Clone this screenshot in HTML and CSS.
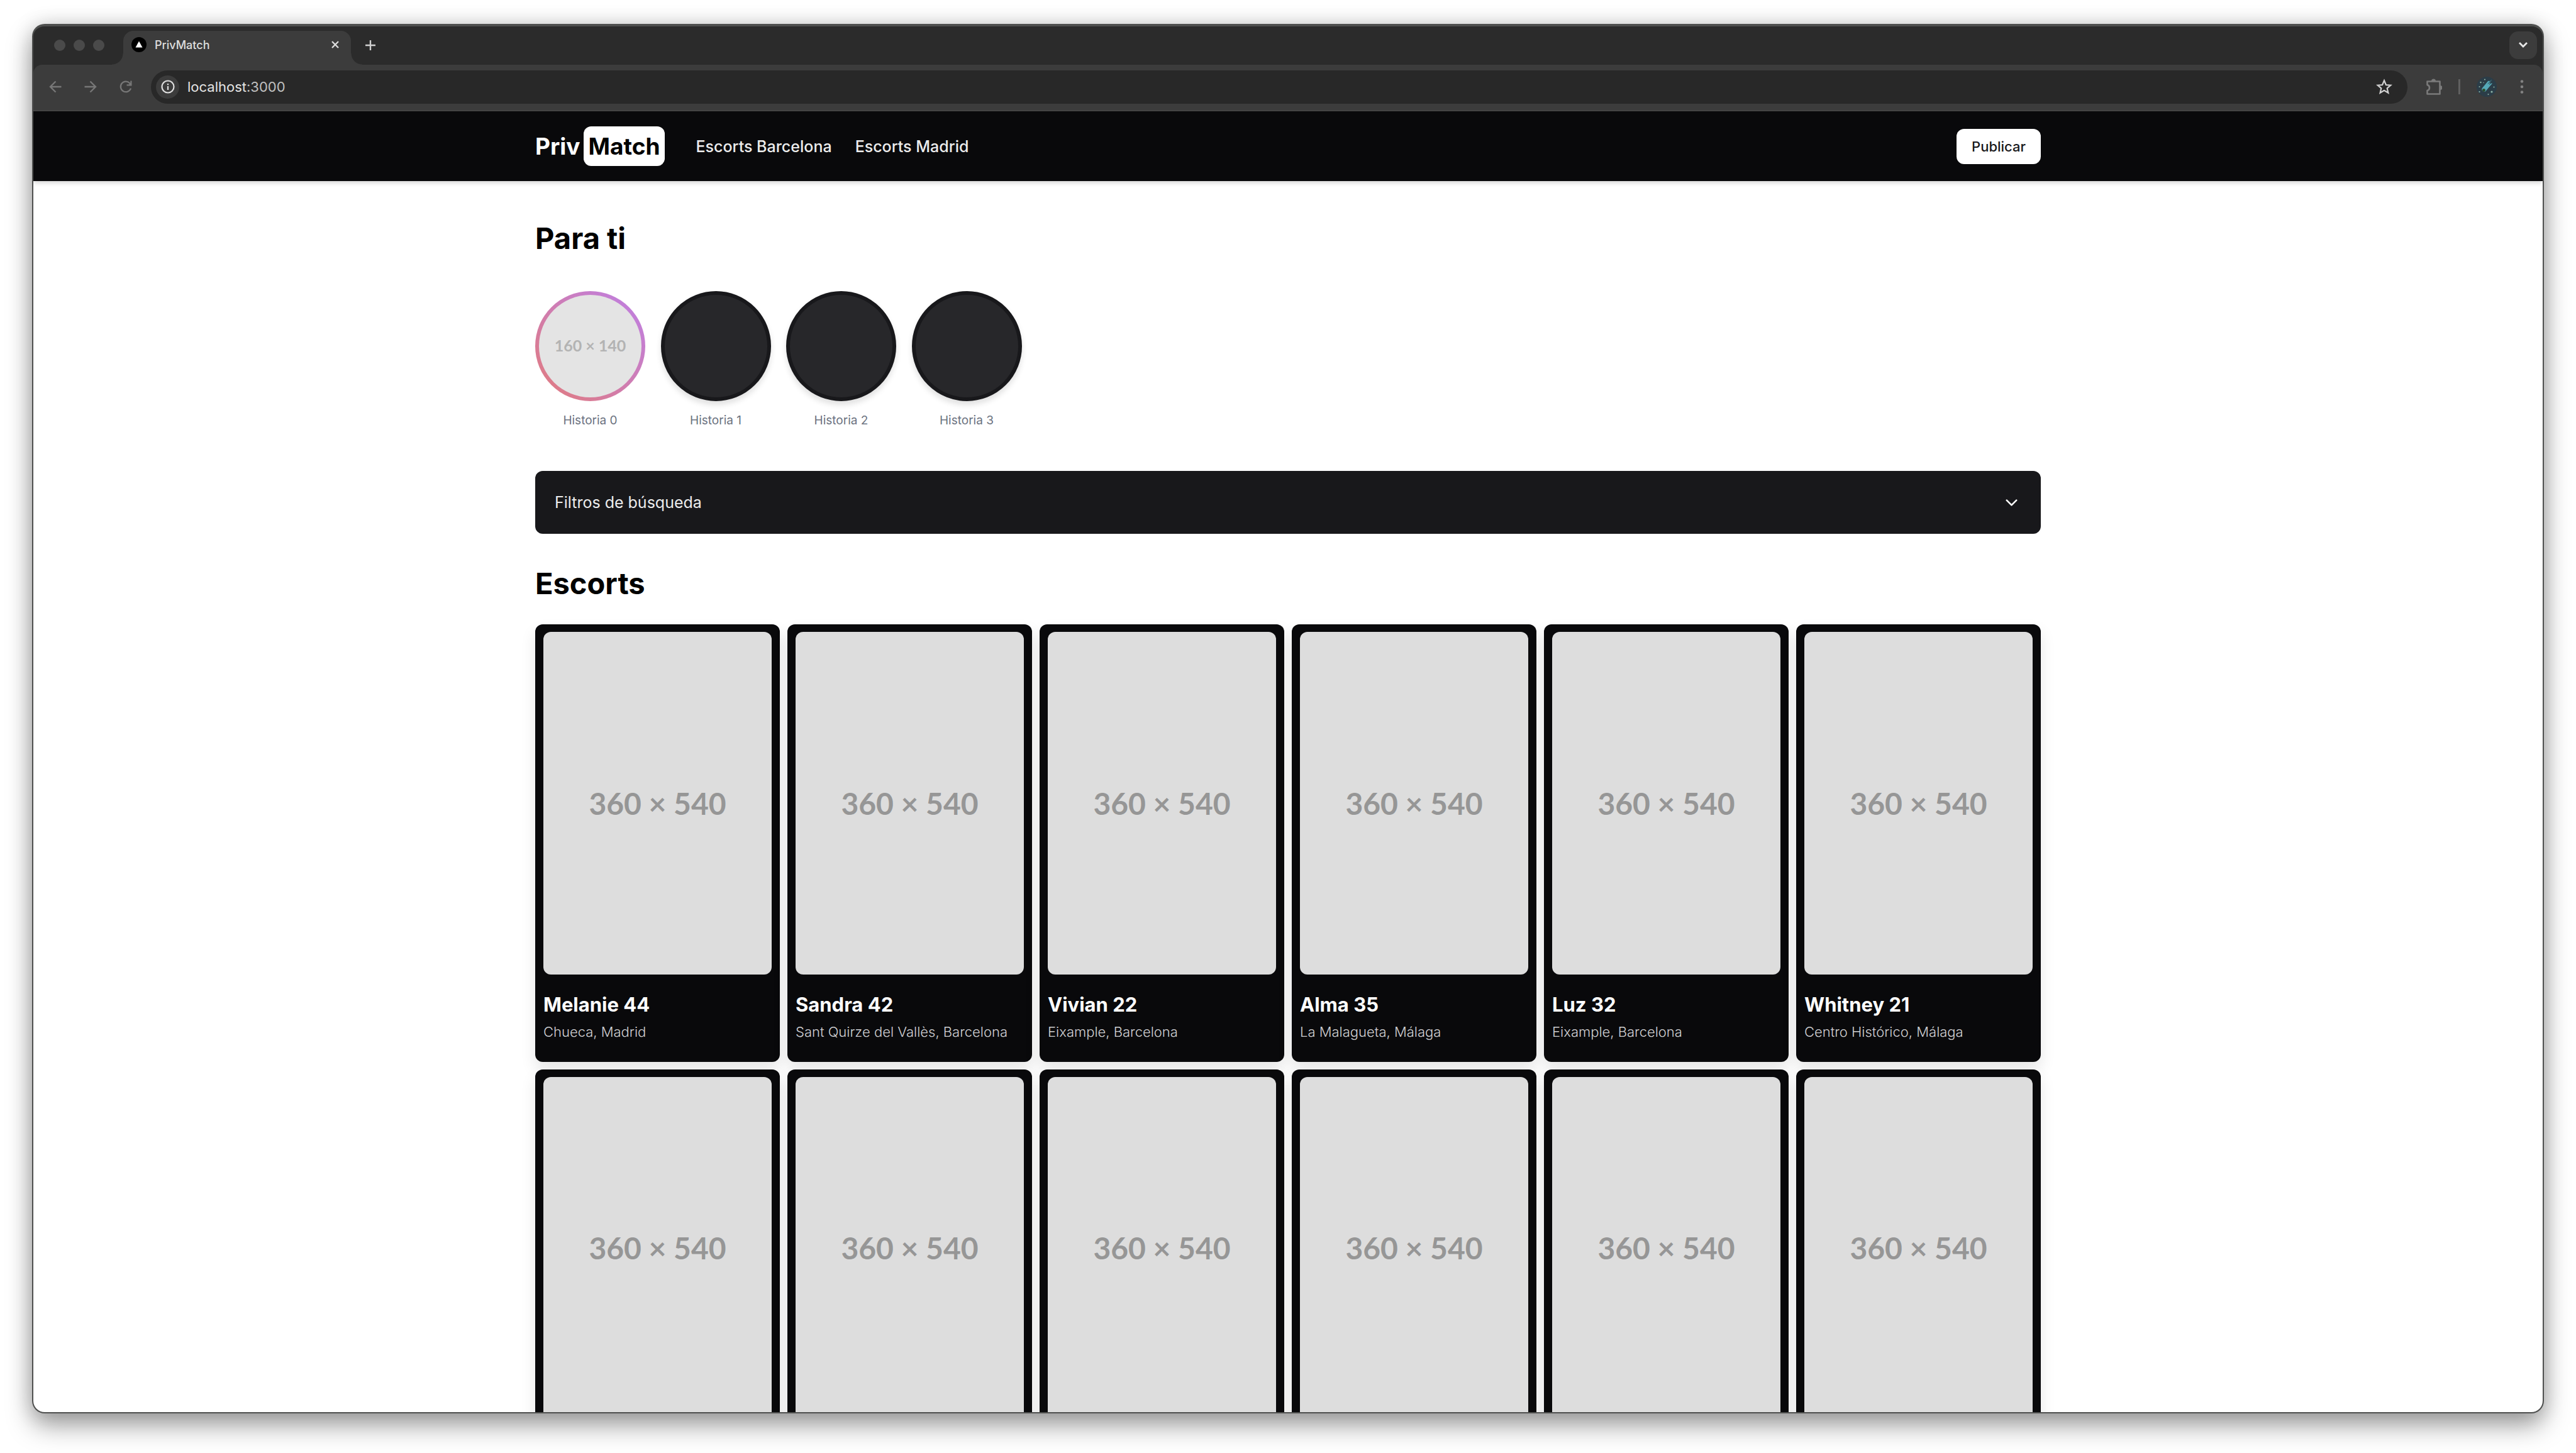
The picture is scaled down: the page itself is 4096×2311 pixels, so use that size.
FILE: index.html
```
<!DOCTYPE html>
<html lang="es">
<head>
<meta charset="utf-8">
<title>PrivMatch</title>
<link rel="stylesheet" href="styles.css">
</head>
<body>
<div class="window">
  <div class="tabstrip">
    <div class="lights"><span class="light"></span><span class="light"></span><span class="light"></span></div>
    <div class="tab">
      <svg class="favicon" viewBox="0 0 24 24"><circle cx="12" cy="12" r="12" fill="#000"/><path d="M12 6.500l5.500 10h-11z" fill="#fff"/></svg>
      <span class="tab-title">PrivMatch</span>
      <button class="bare" aria-label="Cerrar pestaña"><svg width="14" height="14" viewBox="0 0 14 14"><path d="M2 2l10 10M12 2L2 12" stroke="#dcdcdc" stroke-width="2.400" fill="none"/></svg></button>
    </div>
    <button class="bare newtab" aria-label="Nueva pestaña"><svg width="16" height="16" viewBox="0 0 16 16"><path d="M8 0v16M0 8h16" stroke="#d0d0d0" stroke-width="2.400" fill="none"/></svg></button>
    <button class="bare tabsearch" aria-label="Buscar pestañas"><svg width="16" height="11" viewBox="0 0 16 11"><path d="M2 2l6 6 6-6" stroke="#e8e8e8" stroke-width="2.800" fill="none"/></svg></button>
  </div>
  <div class="toolbar">
    <div class="nav-buttons">
      <button class="bare" aria-label="Atrás"><svg width="24" height="24" viewBox="0 0 24 24"><path d="M21.500 12H4M12.500 3.500L4 12l8.500 8.500" stroke="#777" stroke-width="2.400" fill="none"/></svg></button>
      <button class="bare" aria-label="Adelante"><svg width="24" height="24" viewBox="0 0 24 24"><path d="M2.500 12H20M11.500 3.500L20 12l-8.500 8.500" stroke="#777" stroke-width="2.400" fill="none"/></svg></button>
      <button class="bare" aria-label="Recargar"><svg width="24" height="24" viewBox="0 0 24 24"><path d="M20 14.500A8.300 8.300 0 1 1 18.200 6.200L20 8" stroke="#777" stroke-width="2.300" fill="none"/><path d="M21.500 2.500V10.500H13.500V8.300H17L19.300 6V2.500z" fill="#777"/></svg></button>
    </div>
    <div class="address">
      <span class="site-info"><svg width="22" height="22" viewBox="0 0 22 22"><circle cx="11" cy="11" r="9.500" stroke="#dedede" stroke-width="2.200" fill="none"/><path d="M11 10v6M11 6v2.200" stroke="#dedede" stroke-width="2.200"/></svg></span>
      <span class="url">localhost<span class="port">:3000</span></span>
      <button class="bare star" aria-label="Añadir a marcadores"><svg width="26" height="26" viewBox="0 0 26 26"><path d="M13 3l2.900 7 7.400.600-5.600 4.900 1.700 7.300L13 18.900l-6.400 3.900 1.700-7.300L2.700 10.600l7.400-.600z" stroke="#d2d2d2" stroke-width="2.200" fill="none"/></svg></button>
    </div>
    <div class="extras">
      <button class="bare" aria-label="Extensiones"><svg width="26" height="28" viewBox="0 0 26 28"><path d="M2.500 5.500h20v20h-20v-5.500q3.500-1 3.500-4.500t-3.500-4.500z" stroke="#7a7a7a" stroke-width="2.600" stroke-linejoin="round" fill="none"/><path d="M9 5a3.500 3.500 0 0 1 7 0zM23 12a3.500 3.500 0 0 1 0 7z" fill="#7a7a7a"/></svg></button>
      <span class="divider"></span>
      <button class="bare avatar" aria-label="Perfil"><svg width="32" height="32" viewBox="0 0 32 32"><circle cx="16" cy="16" r="16" fill="#2b3d48"/><path d="M8.500 18.500L18.500 6.500 20 7.200 24 5l-2.500 4-1 1.500 4.500 0-2 2.500-1.500 1.500-7.500 9a4 4 0 0 1-5.500-5z" fill="#55a9b8"/><path d="M18 11.500l5-5.500M20 12.500l3-2.500" stroke="#2b3d48" stroke-width="1" fill="none"/><circle cx="11.500" cy="21.500" r="2.400" fill="#2c4a2c"/><g fill="#8fb5a8"><circle cx="6.500" cy="9" r="1.200"/><circle cx="13" cy="4.500" r="1.100"/><circle cx="4.500" cy="16" r="1"/><circle cx="11" cy="9.500" r=".7"/><circle cx="24" cy="24" r="1.600"/><circle cx="18.500" cy="28" r="1"/><circle cx="4.500" cy="24" r="1.100"/><circle cx="27.500" cy="16.500" r="1"/></g></svg></button>
      <button class="bare" aria-label="Menú"><svg width="6" height="24" viewBox="0 0 6 24"><g fill="#828282"><circle cx="3" cy="3.500" r="2.300"/><circle cx="3" cy="12" r="2.300"/><circle cx="3" cy="20.500" r="2.300"/></g></svg></button>
    </div>
  </div>

  <div class="page">
    <header class="site-header">
      <div class="container header-row">
        <a class="logo" href="#">Priv<span class="logo-box">Match</span></a>
        <nav class="site-nav"><a href="#">Escorts Barcelona</a><a href="#">Escorts Madrid</a></nav>
        <button class="publish">Publicar</button>
      </div>
    </header>
    <main class="container main">
      <h1 class="heading">Para ti</h1>
      <div class="stories">
        <figure class="story"><div class="ring ring-new"><span class="story-thumb">160 × 140</span></div><figcaption>Historia 0</figcaption></figure>
        <figure class="story"><div class="ring"></div><figcaption>Historia 1</figcaption></figure>
        <figure class="story"><div class="ring"></div><figcaption>Historia 2</figcaption></figure>
        <figure class="story"><div class="ring"></div><figcaption>Historia 3</figcaption></figure>
      </div>
      <button class="filters">Filtros de búsqueda<svg width="31" height="31" viewBox="0 0 24 24"><path d="M6 9l6 6 6-6" stroke="#fff" stroke-width="2" stroke-linecap="round" stroke-linejoin="round" fill="none"/></svg></button>
      <h2 class="heading">Escorts</h2>
      <div class="cards">
        <article class="card"><div class="photo">360 × 540</div><h3>Melanie 44</h3><p>Chueca, Madrid</p></article>
        <article class="card"><div class="photo">360 × 540</div><h3>Sandra 42</h3><p>Sant Quirze del Vallès, Barcelona</p></article>
        <article class="card"><div class="photo">360 × 540</div><h3>Vivian 22</h3><p>Eixample, Barcelona</p></article>
        <article class="card"><div class="photo">360 × 540</div><h3>Alma 35</h3><p>La Malagueta, Málaga</p></article>
        <article class="card"><div class="photo">360 × 540</div><h3>Luz 32</h3><p>Eixample, Barcelona</p></article>
        <article class="card"><div class="photo">360 × 540</div><h3>Whitney 21</h3><p>Centro Histórico, Málaga</p></article>
        <article class="card"><div class="photo">360 × 540</div></article>
        <article class="card"><div class="photo">360 × 540</div></article>
        <article class="card"><div class="photo">360 × 540</div></article>
        <article class="card"><div class="photo">360 × 540</div></article>
        <article class="card"><div class="photo">360 × 540</div></article>
        <article class="card"><div class="photo">360 × 540</div></article>
      </div>
    </main>
  </div>
</div>
</body>
</html>
```
FILE: styles.css
```
* { box-sizing: border-box; }

body {
  margin: 0;
  height: 100vh;
  padding: 38px 51px 63px;
  display: flex;
  overflow: hidden;
  background: #fff;
  font-family: Inter, "Liberation Sans", sans-serif;
}

h1, h2, h3, p, figure { margin: 0; }
a { color: inherit; text-decoration: none; }
svg { display: block; }
button { font: inherit; cursor: pointer; }
.bare { padding: 0; border: 0; background: none; color: inherit; }

/* Browser window */
.window {
  flex: 1;
  display: flex;
  flex-direction: column;
  overflow: hidden;
  border: 2px solid #4e4f4e;
  border-top-width: 4px;
  border-radius: 20px;
  background: #3c3c3c;
  box-shadow: 0 20px 40px rgba(0, 0, 0, .36), 0 0 32px rgba(0, 0, 0, .16);
}

.tabstrip {
  flex: none;
  display: flex;
  align-items: center;
  height: 61px;
  padding: 0 9px 2px 33px;
  background: #2b2b2b;
}
.lights { display: flex; gap: 13px; width: 110px; }
.light { width: 18px; height: 18px; border-radius: 50%; background: #4a4a4a; }
.tab {
  position: relative;
  align-self: flex-end;
  display: flex;
  align-items: center;
  width: 362px;
  height: 54px;
  margin-bottom: -2px;
  padding: 0 18px 10px 13px;
  border-radius: 16px 16px 0 0;
  background: #3c3c3c;
}
.tab::before, .tab::after {
  content: "";
  position: absolute;
  bottom: 0;
  width: 18px;
  height: 18px;
}
.tab::before { left: -18px; background: radial-gradient(circle at 0 0, #2b2b2b 17px, #3c3c3c 18px); }
.tab::after { right: -18px; background: radial-gradient(circle at 100% 0, #2b2b2b 17px, #3c3c3c 18px); }
.favicon { width: 24px; height: 24px; }
.tab-title { flex: 1; padding-left: 13px; font-size: 18px; font-weight: 500; color: #dedede; }
.newtab { margin-left: 23px; }
.tabsearch {
  display: grid;
  place-items: center;
  width: 44px;
  height: 44px;
  margin-left: auto;
  border-radius: 14px;
  background: #3c3c3c;
}

.toolbar {
  flex: none;
  display: flex;
  align-items: center;
  height: 74px;
  padding: 0 30px 2px 23px;
  border-bottom: 2px solid #444;
  border-radius: 14px 14px 0 0;
  box-shadow: 0 -14px 0 #2b2b2b;
  background: #3c3c3c;
}
.tabstrip { z-index: 1; }
.nav-buttons { display: flex; gap: 32px; width: 164px; }
.address {
  flex: 1;
  display: flex;
  align-items: center;
  height: 53px;
  padding: 0 24px 0 8px;
  border-radius: 27px;
  background: #282828;
}
.site-info {
  display: grid;
  place-items: center;
  width: 37px;
  height: 37px;
  border-radius: 50%;
  background: #3c3c3c;
}
.url { padding-left: 13px; font-size: 22px; color: #e3e3e3; }
.port { color: #c0c0c0; }
.star { margin-left: auto; }
.extras { display: flex; align-items: center; padding-left: 29px; }
.divider { width: 3px; height: 24px; margin: 0 26px; background: #606060; }
.avatar { margin-right: 37px; }

/* Page */
.page { flex: 1; min-height: 0; overflow: hidden; background: #fff; }
.container { width: 60%; margin: 0 auto; }

.site-header {
  position: relative;
  background: #09090b;
  box-shadow: 0 2px 8px rgba(0, 0, 0, .2);
}
.header-row { display: flex; align-items: center; height: 111px; color: #fff; }
.logo { display: flex; align-items: center; gap: 5px; font-size: 37px; font-weight: 700; }
.logo-box { padding: 0 8px; border-radius: 12px; background: #fff; color: #000; line-height: 63px; }
.site-nav { display: flex; gap: 37px; margin-left: 49px; font-size: 25px; font-weight: 500; color: #ececec; }
.publish {
  height: 56px;
  margin-left: auto;
  padding: 0 24px;
  border: 0;
  border-radius: 12px;
  background: #fff;
  color: #18181b;
  font-size: 22px;
  font-weight: 500;
}

.main { padding-top: 60px; }
.heading { font-size: 47px; font-weight: 700; line-height: 62px; color: #000; }
.stories { display: grid; grid-template-columns: repeat(12, 1fr); margin: 53px 0 68px; }
.story { width: 175px; }
.ring {
  display: flex;
  width: 175px;
  height: 175px;
  padding: 6px;
  border: 6px solid #18181b;
  border-radius: 50%;
  background: #27272a;
  box-shadow: 0 6px 10px rgba(0, 0, 0, .12);
}
.ring-new { border: 0; background: linear-gradient(45deg, #e27b7b, #bd7fe8); box-shadow: none; }
.story-thumb {
  flex: 1;
  border-radius: 50%;
  background: #e4e4e4;
  color: #b3b3b3;
  font: 700 25px/160px Lato, sans-serif;
  text-align: center;
}
.story figcaption { margin-top: 18px; text-align: center; font-size: 19px; line-height: 25px; color: #6b7280; }

.filters {
  display: flex;
  align-items: center;
  justify-content: space-between;
  width: 100%;
  height: 100px;
  margin-bottom: 48px;
  padding: 0 31px;
  border: 0;
  border-radius: 12px;
  background: #18181b;
  color: #ececec;
  font-size: 25px;
}

.cards { display: grid; grid-template-columns: repeat(6, 1fr); gap: 12px; margin-top: 34px; }
.card {
  padding: 12px 13px 30px;
  border-radius: 12px;
  background: #09090b;
  box-shadow: 0 12px 24px rgba(0, 0, 0, .1);
}
.photo {
  aspect-ratio: 2 / 3;
  border-radius: 12px;
  background: #ddd;
  display: grid;
  place-items: center;
  color: #969696;
  font: 700 48px Lato, sans-serif;
}
.card h3 { margin-top: 28px; font-size: 31px; font-weight: 700; line-height: 40px; color: #fff; }
.card p { margin-top: 5px; font-size: 22px; font-weight: 300; line-height: 36px; color: #d0d0d3; white-space: nowrap; }
```
